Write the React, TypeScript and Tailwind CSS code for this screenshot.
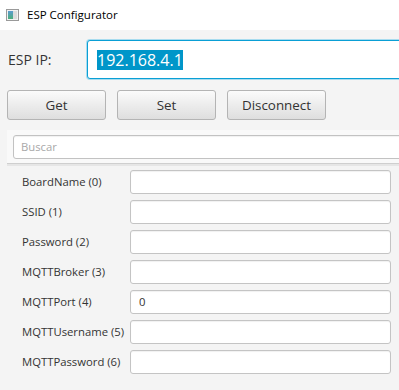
const fields = [
  { label: "BoardName (0)", value: "" },
  { label: "SSID (1)", value: "" },
  { label: "Password (2)", value: "" },
  { label: "MQTTBroker (3)", value: "" },
  { label: "MQTTPort (4)", value: "0" },
  { label: "MQTTUsername (5)", value: "" },
  { label: "MQTTPassword (6)", value: "" },
]

const WindowIcon = () => (
  <svg width="13" height="12" viewBox="0 0 13 12">
    <defs>
      <linearGradient id="g" x1="0" y1="0" x2="0" y2="1">
        <stop offset="0" stopColor="#5b9bd0" />
        <stop offset="1" stopColor="#4caf7a" />
      </linearGradient>
    </defs>
    <rect x="0.5" y="0.5" width="12" height="11" fill="#f2f2f2" stroke="#9a9a9a" />
    <rect x="2" y="2" width="5" height="8" fill="url(#g)" />
    <rect x="7" y="2" width="4" height="8" fill="#dcdcdc" />
  </svg>
)

const Button = ({ children }: { children: string }) => (
  <div className="w-[99px] h-[30px] flex items-center justify-center rounded-[3px] border border-[#b4b4b4] bg-gradient-to-b from-[#fbfbfb] to-[#dedede] text-[13.4px] text-[#333]">
    {children}
  </div>
)

export default function App() {
  return (
    <div
      className="w-[399px] h-[390px] overflow-hidden bg-[#f4f4f4] text-[#333]"
      style={{ fontFamily: '"Open Sans", "Noto Sans", sans-serif' }}
    >
      {/* title bar */}
      <div className="h-[30px] bg-white flex items-center pl-[6px] gap-[8px] text-[11.5px] text-black">
        <WindowIcon />
        <span>ESP Configurator</span>
      </div>

      {/* ip row */}
      <div className="flex items-center mt-[10px] pl-[8px] h-[39px]">
        <span className="w-[79px] shrink-0 text-[14px]">ESP IP:</span>
        <div className="w-[330px] h-[39px] shrink-0 rounded-[3px] border border-[#0a9fd5] shadow-[0_0_0_1px_#a8dcef] bg-white flex items-center pl-[9px]">
          <span className="bg-[#0096c9] text-white text-[16px] leading-[20px]">192.168.4.1</span>
        </div>
      </div>

      {/* buttons */}
      <div className="flex gap-[11px] mt-[11px] pl-[7px]">
        <Button>Get</Button>
        <Button>Set</Button>
        <Button>Disconnect</Button>
      </div>

      {/* search bar */}
      <div className="ml-[7px] mt-[10px] h-[34px] bg-[#f9f9f9] border-b border-[#cfcfcf] pl-[6px] pt-[5px]">
        <div className="w-[400px] h-[24px] rounded-[3px] border border-[#c2c2c2] bg-white shadow-[inset_0_1px_1px_rgba(0,0,0,0.06)] flex items-center pl-[7px] text-[11.3px] text-[#a8a8a8]">
          Buscar
        </div>
      </div>
      <div className="ml-[7px] h-[2px] bg-[#e6e6e6]" />

      {/* properties */}
      <div className="flex flex-col gap-[6px] mt-[4px]">
        {fields.map((f) => (
          <div key={f.label} className="flex items-center h-[24px]">
            <span className="w-[130px] shrink-0 pl-[22px] text-[11.3px] text-[#333] whitespace-nowrap">{f.label}</span>
            <div className="w-[261px] h-[24px] shrink-0 rounded-[3px] border border-[#c4c4c4] bg-white shadow-[inset_0_1px_1px_rgba(0,0,0,0.06)] flex items-center pl-[8px] text-[11.3px] text-[#333]">
              {f.value}
            </div>
          </div>
        ))}
      </div>
    </div>
  )
}
